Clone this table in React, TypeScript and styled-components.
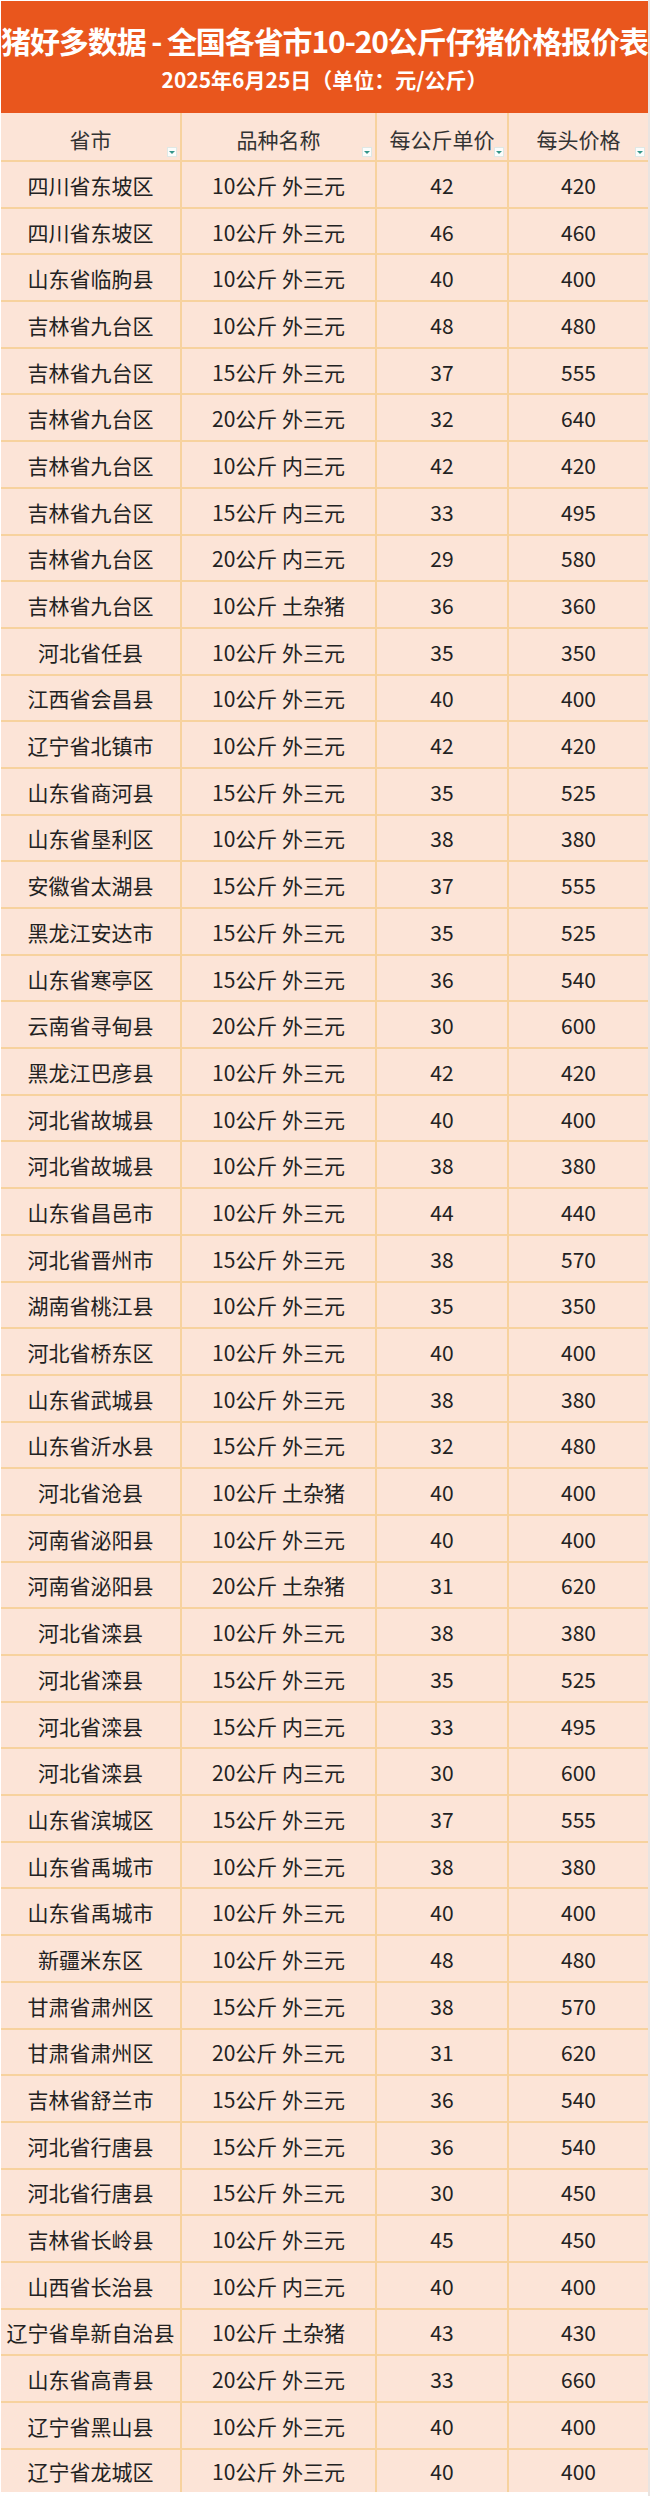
import React from "react";
import styled, { createGlobalStyle } from "styled-components";

const GlobalStyle = createGlobalStyle`
  html, body { margin: 0; padding: 0; background: #ffffff; }
  body { font-family: "Noto Sans CJK SC", "Noto Sans", sans-serif; }
  * { box-sizing: border-box; }
`;

const LINE = "#F7D29E";
const CELL_BG = "#FCE4D7";
const ORANGE = "#E9561D";

const Page = styled.div`
  width: 650px;
  padding: 1px 2px 4px 1px;
  background: #ffffff;
  position: relative;
  &::after {
    content: "";
    position: absolute;
    top: 0;
    right: 0;
    width: 2px;
    height: 100%;
    background: #e9e4e1;
  }
`;

const TitleBand = styled.header`
  height: 112px;
  background: ${ORANGE};
  color: #ffffff;
  display: flex;
  flex-direction: column;
  align-items: center;
  overflow: hidden;
  white-space: nowrap;
`;

const MainTitle = styled.h1`
  margin: 19px 0 0 0;
  font-family: "Noto Sans CJK SC", sans-serif;
  font-weight: 700;
  font-size: 30px;
  line-height: 40px;
  letter-spacing: -1.1px;
`;

const SubTitle = styled.h2`
  margin: 5px 0 0 0;
  font-family: "Noto Sans CJK SC", sans-serif;
  font-weight: 700;
  font-size: 21px;
  line-height: 28px;
`;

const Table = styled.div`
  display: flex;
  flex-direction: column;
  background: ${CELL_BG};
`;

const Row = styled.div<{ $header?: boolean }>`
  display: grid;
  grid-template-columns: 181px 195px 132px 1fr;
  height: ${(p) => (p.$header ? "49px" : "46.7px")};
  border-bottom: 2px solid ${LINE};
  &:last-child {
    border-bottom: 0;
    height: 42px;
  }
`;

const Cell = styled.div<{ $header?: boolean }>`
  position: relative;
  display: flex;
  align-items: center;
  justify-content: center;
  border-right: 2px solid ${LINE};
  font-family: "Noto Sans CJK SC", sans-serif;
  font-size: 21px;
  color: ${(p) => (p.$header ? "#333333" : "#222222")};
  padding-top: ${(p) => (p.$header ? "4px" : "1px")};
  white-space: nowrap;
  &:last-child {
    border-right: 0;
  }
`;

const FilterButton = styled.span`
  position: absolute;
  right: 3px;
  bottom: 3px;
  width: 10px;
  height: 10px;
  background: #fbfdfc;
  border: 1px solid #dfe8e5;
  display: flex;
  align-items: center;
  justify-content: center;
  &::after {
    content: "";
    width: 0;
    height: 0;
    border-left: 3px solid transparent;
    border-right: 3px solid transparent;
    border-top: 3px solid #34958a;
  }
`;

type Rec = [string, string, number, number];

const data: Rec[] = [
  ["四川省东坡区", "10公斤 外三元", 42, 420],
  ["四川省东坡区", "10公斤 外三元", 46, 460],
  ["山东省临朐县", "10公斤 外三元", 40, 400],
  ["吉林省九台区", "10公斤 外三元", 48, 480],
  ["吉林省九台区", "15公斤 外三元", 37, 555],
  ["吉林省九台区", "20公斤 外三元", 32, 640],
  ["吉林省九台区", "10公斤 内三元", 42, 420],
  ["吉林省九台区", "15公斤 内三元", 33, 495],
  ["吉林省九台区", "20公斤 内三元", 29, 580],
  ["吉林省九台区", "10公斤 土杂猪", 36, 360],
  ["河北省任县", "10公斤 外三元", 35, 350],
  ["江西省会昌县", "10公斤 外三元", 40, 400],
  ["辽宁省北镇市", "10公斤 外三元", 42, 420],
  ["山东省商河县", "15公斤 外三元", 35, 525],
  ["山东省垦利区", "10公斤 外三元", 38, 380],
  ["安徽省太湖县", "15公斤 外三元", 37, 555],
  ["黑龙江安达市", "15公斤 外三元", 35, 525],
  ["山东省寒亭区", "15公斤 外三元", 36, 540],
  ["云南省寻甸县", "20公斤 外三元", 30, 600],
  ["黑龙江巴彦县", "10公斤 外三元", 42, 420],
  ["河北省故城县", "10公斤 外三元", 40, 400],
  ["河北省故城县", "10公斤 外三元", 38, 380],
  ["山东省昌邑市", "10公斤 外三元", 44, 440],
  ["河北省晋州市", "15公斤 外三元", 38, 570],
  ["湖南省桃江县", "10公斤 外三元", 35, 350],
  ["河北省桥东区", "10公斤 外三元", 40, 400],
  ["山东省武城县", "10公斤 外三元", 38, 380],
  ["山东省沂水县", "15公斤 外三元", 32, 480],
  ["河北省沧县", "10公斤 土杂猪", 40, 400],
  ["河南省泌阳县", "10公斤 外三元", 40, 400],
  ["河南省泌阳县", "20公斤 土杂猪", 31, 620],
  ["河北省滦县", "10公斤 外三元", 38, 380],
  ["河北省滦县", "15公斤 外三元", 35, 525],
  ["河北省滦县", "15公斤 内三元", 33, 495],
  ["河北省滦县", "20公斤 内三元", 30, 600],
  ["山东省滨城区", "15公斤 外三元", 37, 555],
  ["山东省禹城市", "10公斤 外三元", 38, 380],
  ["山东省禹城市", "10公斤 外三元", 40, 400],
  ["新疆米东区", "10公斤 外三元", 48, 480],
  ["甘肃省肃州区", "15公斤 外三元", 38, 570],
  ["甘肃省肃州区", "20公斤 外三元", 31, 620],
  ["吉林省舒兰市", "15公斤 外三元", 36, 540],
  ["河北省行唐县", "15公斤 外三元", 36, 540],
  ["河北省行唐县", "15公斤 外三元", 30, 450],
  ["吉林省长岭县", "10公斤 外三元", 45, 450],
  ["山西省长治县", "10公斤 内三元", 40, 400],
  ["辽宁省阜新自治县", "10公斤 土杂猪", 43, 430],
  ["山东省高青县", "20公斤 外三元", 33, 660],
  ["辽宁省黑山县", "10公斤 外三元", 40, 400],
  ["辽宁省龙城区", "10公斤 外三元", 40, 400],
];

const headers = ["省市", "品种名称", "每公斤单价", "每头价格"];

export default function App() {
  return (
    <>
      <GlobalStyle />
      <Page>
        <TitleBand>
          <MainTitle>猪好多数据 - 全国各省市10-20公斤仔猪价格报价表</MainTitle>
          <SubTitle>2025年6月25日（单位：元/公斤）</SubTitle>
        </TitleBand>
        <Table>
          <Row $header>
            {headers.map((h) => (
              <Cell $header key={h}>
                {h}
                <FilterButton />
              </Cell>
            ))}
          </Row>
          {data.map((r, i) => (
            <Row key={i}>
              <Cell>{r[0]}</Cell>
              <Cell>{r[1]}</Cell>
              <Cell>{r[2]}</Cell>
              <Cell>{r[3]}</Cell>
            </Row>
          ))}
        </Table>
      </Page>
    </>
  );
}
